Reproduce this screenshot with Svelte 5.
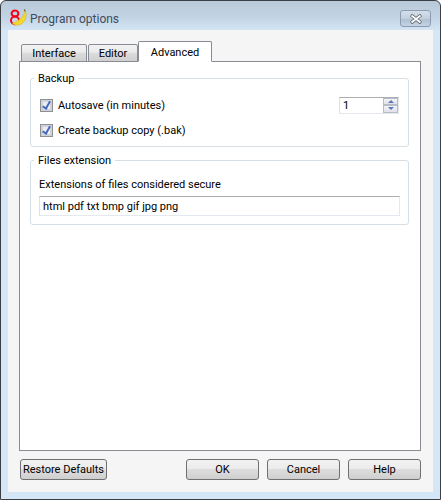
<script>
  const tabs = ['Interface', 'Editor', 'Advanced'];
  let active = $state('Advanced');
  let minutes = $state(1);
  let autosave = $state(true);
  let backup = $state(true);
  let extensions = $state('html pdf txt bmp gif jpg png');
</script>

<div class="window">
  <header class="titlebar">
    <svg class="logo" width="20" height="20" viewBox="0 0 20 20">
      <ellipse cx="6" cy="5.6" rx="3.4" ry="3" fill="none" stroke="#f5001a" stroke-width="2" />
      <ellipse cx="6" cy="12.4" rx="4" ry="3.8" fill="none" stroke="#f5001a" stroke-width="2" />
      <path d="M15.5 3 C15.5 7 12.5 11.5 3.5 15.5 C6 17.6 10 17.6 13 15.6 C16.5 13 18 8 16.5 3 Z" fill="#f2d82e" stroke="#d9b71f" stroke-width="0.6" />
      <path d="M15.4 1.4 L16.2 3.4" stroke="#5f5a20" stroke-width="1.2" fill="none" />
    </svg>
    <span class="title">Program options</span>
    <button class="close" aria-label="Close">
      <svg width="14" height="10" viewBox="0 0 14 10">
        <path d="M2 1 L12 9 M12 1 L2 9" stroke="#5a6068" stroke-width="3.4" />
        <path d="M2.5 1.5 L11.5 8.5 M11.5 1.5 L2.5 8.5" stroke="#fff" stroke-width="1.8" />
      </svg>
    </button>
  </header>

  <div class="client">
    <div class="tabs">
      {#each tabs as tab}
        <button class="tab tab-{tab.toLowerCase()}" class:active={active === tab} onclick={() => (active = tab)}>{tab}</button>
      {/each}
    </div>

    <div class="pane">
      <fieldset class="backup">
        <legend>Backup</legend>
        <div class="row">
          <label class="check">
            <input type="checkbox" bind:checked={autosave} />
            <span class="box"></span>
            Autosave (in minutes)
          </label>
          <div class="spin">
            <span class="spin-value">{minutes}</span>
            <div class="spin-btns">
              <button aria-label="Up" onclick={() => minutes++}><i class="up"></i></button>
              <button aria-label="Down" onclick={() => minutes--}><i class="down"></i></button>
            </div>
          </div>
        </div>
        <label class="check second">
          <input type="checkbox" bind:checked={backup} />
          <span class="box"></span>
          Create backup copy (.bak)
        </label>
      </fieldset>

      <fieldset class="files">
        <legend>Files extension</legend>
        <div class="caption">Extensions of files considered secure</div>
        <input class="text" type="text" bind:value={extensions} />
      </fieldset>
    </div>

    <footer class="buttons">
      <button class="btn restore">Restore Defaults</button>
      <div class="spacer"></div>
      <button class="btn">OK</button>
      <button class="btn">Cancel</button>
      <button class="btn">Help</button>
    </footer>
  </div>
</div>

<style>
  :global(body) {
    margin: 0;
    background: #fff;
  }

  .window {
    width: 441px;
    height: 500px;
    box-sizing: border-box;
    border: 1px solid #3c4044;
    border-radius: 6px 6px 0 0;
    background: linear-gradient(#b8c9d9 0, #c2d4e4 16px, #d5e6f6 30px);
    padding: 0 7px 7px 7px;
    display: flex;
    flex-direction: column;
    font-family: Roboto, sans-serif;
    font-size: 11px;
    color: #000;
  }

  .titlebar {
    height: 29px;
    flex: none;
    display: flex;
    align-items: center;
    position: relative;
  }

  .logo {
    margin: 5px 0 0 1px;
  }

  .title {
    margin: 6px 0 0 1px;
    font-size: 12px;
    color: #3f4c5c;
  }

  .close {
    position: absolute;
    right: 2px;
    top: 9px;
    width: 31px;
    height: 17px;
    padding: 0;
    display: flex;
    align-items: center;
    justify-content: center;
    border: 1px solid #8b9bb2;
    border-radius: 3px;
    background: linear-gradient(#d3dfea, #c2d0de 50%, #aebfd0 52%, #c4d4e2);
  }

  .client {
    flex: 1;
    background: #f5f5f5;
    padding: 11px 12px 12px 11px;
    display: flex;
    flex-direction: column;
    min-height: 0;
  }

  .tabs {
    display: flex;
    align-items: flex-end;
    height: 21px;
    padding-left: 2px;
    margin-bottom: -1px;
    position: relative;
    z-index: 1;
  }

  .tab {
    height: 18px;
    padding: 0;
    font: inherit;
    color: #000;
    border: 1px solid #898c95;
    border-radius: 2px 2px 0 0;
    background: linear-gradient(#f2f2f2, #ebebeb 45%, #dcdcdc 50%, #cfcfcf);
    margin-right: 1px;
  }

  .tab-interface { width: 66px; }
  .tab-editor { width: 50px; margin-right: 0; }
  .tab-advanced { width: 74px; }

  .tab.active {
    height: 21px;
    padding-top: 1px;
    background: #fff;
    border-bottom-color: #fff;
  }

  .pane {
    flex: 1;
    background: #fff;
    border: 1px solid #898c95;
    padding: 8px 11px 0 10px;
    display: flex;
    flex-direction: column;
    gap: 5px;
  }

  fieldset {
    margin: 0;
    border: 1px solid #d5dfe5;
    border-radius: 3px;
    min-width: 0;
    box-sizing: border-box;
    padding: 0 8px;
  }

  legend {
    margin-left: -5px;
    padding: 2px 4px 0;
    line-height: 14px;
  }

  .backup {
    height: 77px;
    padding-top: 10px;
  }

  .files {
    height: 73px;
    padding-top: 9px;
  }

  .row {
    display: flex;
    align-items: center;
    justify-content: space-between;
    height: 18px;
  }

  .check {
    display: flex;
    align-items: center;
    gap: 5px;
    height: 18px;
    margin-left: 1px;
  }

  .second {
    margin-top: 7px;
  }

  .check input {
    display: none;
  }

  .box {
    width: 11px;
    height: 11px;
    border: 1px solid #8e8f8f;
    background: linear-gradient(135deg, #e4e7ee, #f6f7f9);
    box-shadow: inset 0 0 0 2px #cdd2dc;
    position: relative;
  }

  .check input:checked + .box::after {
    content: "";
    position: absolute;
    left: 3px;
    top: 0;
    width: 3px;
    height: 7px;
    border: solid #4a66b8;
    border-width: 0 2px 2px 0;
    transform: rotate(30deg);
  }

  .spin {
    width: 60px;
    height: 17px;
    margin-right: 1px;
    box-sizing: border-box;
    border: 1px solid #e3e9ef;
    border-top-color: #abadb3;
    border-left-color: #dbdfe6;
    display: flex;
    justify-content: space-between;
  }

  .spin-value {
    padding-left: 3px;
    line-height: 16px;
  }

  .spin-btns {
    width: 15px;
    display: flex;
    flex-direction: column;
  }

  .spin-btns button {
    flex: 1;
    padding: 0;
    border: 1px solid #b8bcc4;
    background: linear-gradient(#f4f5f8, #e0e2e8);
    display: flex;
    align-items: center;
    justify-content: center;
  }

  .up, .down {
    width: 0;
    height: 0;
    border-left: 3px solid transparent;
    border-right: 3px solid transparent;
  }

  .up { border-bottom: 3px solid #5a76c0; }
  .down { border-top: 3px solid #5a76c0; }

  .caption {
    line-height: 15px;
    height: 15px;
    margin-bottom: 4px;
  }

  .text {
    display: block;
    width: 100%;
    height: 20px;
    box-sizing: border-box;
    border: 1px solid #e3e9ef;
    border-top-color: #abadb3;
    border-left-color: #dbdfe6;
    padding: 1px 3px 0;
    font: inherit;
    color: #000;
    outline: none;
  }

  .buttons {
    flex: none;
    display: flex;
    gap: 8px;
    margin-top: 8px;
    padding: 0 0 0 1px;
  }

  .spacer {
    flex: 1;
  }

  .btn {
    width: 73px;
    height: 21px;
    padding: 0;
    font: inherit;
    color: #000;
    border: 1px solid #707070;
    border-radius: 3px;
    white-space: nowrap;
    background: linear-gradient(#f2f2f2, #ebebeb 48%, #dddddd 50%, #cfcfcf);
  }

  .restore {
    width: 87px;
  }
</style>
